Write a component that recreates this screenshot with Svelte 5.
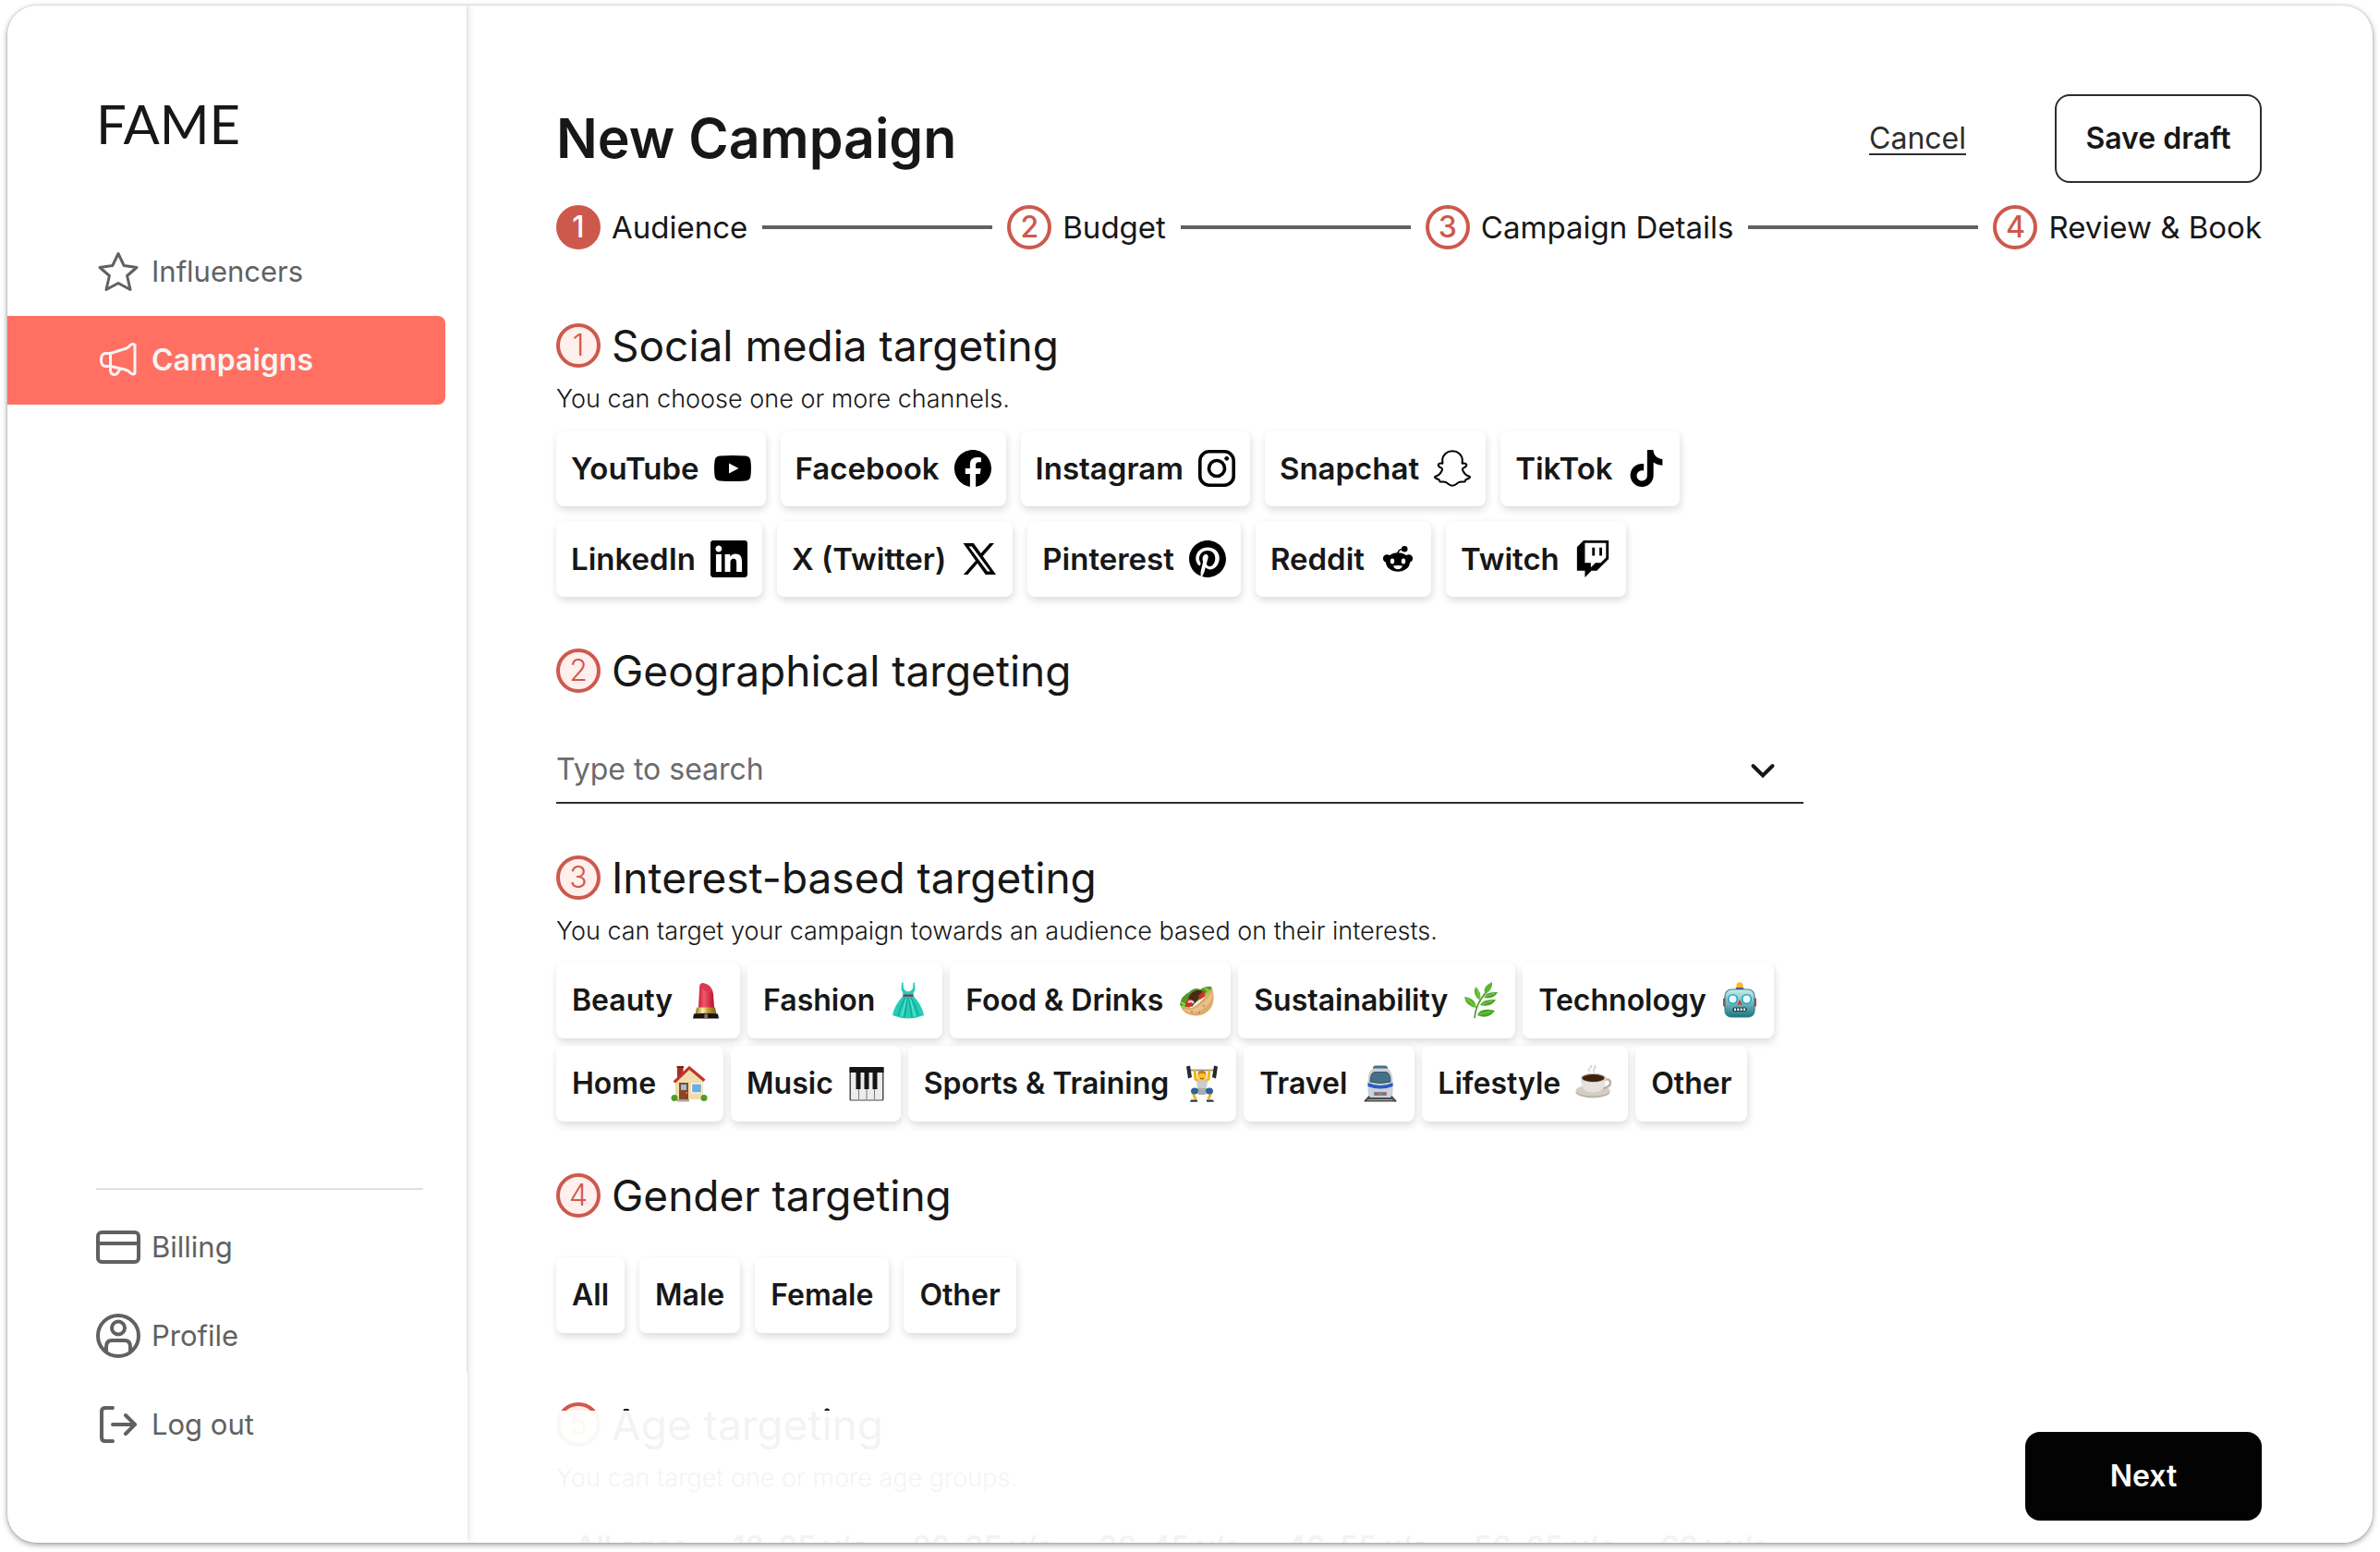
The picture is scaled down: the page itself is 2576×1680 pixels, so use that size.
<script>
    const steps = ['Audience', 'Budget', 'Campaign Details', 'Review & Book']

    const channels = [
        ['YouTube', 'youtube'],
        ['Facebook', 'facebook'],
        ['Instagram', 'instagram'],
        ['Snapchat', 'snapchat'],
        ['TikTok', 'tiktok'],
        ['LinkedIn', 'linkedin'],
        ['X (Twitter)', 'x'],
        ['Pinterest', 'pinterest'],
        ['Reddit', 'reddit'],
        ['Twitch', 'twitch']
    ]

    const interests = [
        ['Beauty', 'lipstick'],
        ['Fashion', 'dress'],
        ['Food & Drinks', 'wrap'],
        ['Sustainability', 'herb'],
        ['Technology', 'robot'],
        ['Home', 'house'],
        ['Music', 'piano'],
        ['Sports & Training', 'lifter'],
        ['Travel', 'train'],
        ['Lifestyle', 'coffee'],
        ['Other', null]
    ]

    const genders = ['All', 'Male', 'Female', 'Other']
    const ages = ['All ages', '18–25 y/o', '26–35 y/o', '36–45 y/o', '46–55 y/o', '56–65 y/o', '66+ y/o']

    // single colour brand marks on a 24 grid
    const marks = {
        facebook: 'M24 12.073c0-6.627-5.373-12-12-12s-12 5.373-12 12c0 5.99 4.388 10.954 10.125 11.854v-8.385H7.078v-3.47h3.047V9.43c0-3.007 1.792-4.669 4.533-4.669 1.312 0 2.686.235 2.686.235v2.953H15.83c-1.491 0-1.956.925-1.956 1.874v2.25h3.328l-.532 3.47h-2.796v8.385C19.612 23.027 24 18.062 24 12.073z',
        tiktok: 'M12.525.02c1.31-.02 2.61-.01 3.91-.02.08 1.53.63 3.09 1.75 4.17 1.12 1.11 2.7 1.62 4.24 1.79v4.03c-1.44-.05-2.89-.35-4.2-.97-.57-.26-1.1-.59-1.62-.93-.01 2.92.01 5.84-.02 8.75-.08 1.4-.54 2.79-1.35 3.94-1.31 1.92-3.58 3.17-5.91 3.21-1.43.08-2.86-.31-4.08-1.03-2.02-1.19-3.44-3.37-3.65-5.71-.02-.5-.03-1-.01-1.49.18-1.9 1.12-3.72 2.58-4.96 1.66-1.44 3.98-2.13 6.15-1.72.02 1.48-.04 2.96-.04 4.44-.99-.32-2.15-.23-3.02.37-.63.41-1.11 1.04-1.36 1.75-.21.51-.15 1.07-.14 1.61.24 1.64 1.82 3.02 3.5 2.87 1.12-.01 2.19-.66 2.77-1.61.19-.33.4-.67.41-1.06.1-1.79.06-3.57.07-5.36.01-4.03-.01-8.05.02-12.07z',
        linkedin: 'M20.447 20.452h-3.554v-5.569c0-1.328-.027-3.037-1.852-3.037-1.853 0-2.136 1.445-2.136 2.939v5.667H9.351V9h3.414v1.561h.046c.477-.9 1.637-1.85 3.37-1.85 3.601 0 4.267 2.37 4.267 5.455v6.286zM5.337 7.433c-1.144 0-2.063-.926-2.063-2.065 0-1.138.92-2.063 2.063-2.063 1.14 0 2.064.925 2.064 2.063 0 1.139-.925 2.065-2.064 2.065zm1.782 13.019H3.555V9h3.564v11.452zM22.225 0H1.771C.792 0 0 .774 0 1.729v20.542C0 23.227.792 24 1.771 24h20.451C23.2 24 24 23.227 24 22.271V1.729C24 .774 23.2 0 22.222 0h.003z',
        pinterest: 'M12.017 0C5.396 0 .029 5.367.029 11.987c0 5.079 3.158 9.417 7.618 11.162-.105-.949-.199-2.403.041-3.439.219-.937 1.406-5.957 1.406-5.957s-.359-.72-.359-1.781c0-1.663.967-2.911 2.168-2.911 1.024 0 1.518.769 1.518 1.688 0 1.029-.653 2.567-.992 3.992-.285 1.193.6 2.165 1.775 2.165 2.128 0 3.768-2.245 3.768-5.487 0-2.861-2.063-4.869-5.008-4.869-3.41 0-5.409 2.562-5.409 5.199 0 1.033.394 2.143.889 2.741.099.12.112.225.085.345-.09.375-.293 1.199-.334 1.363-.053.225-.172.271-.401.165-1.495-.69-2.433-2.878-2.433-4.646 0-3.776 2.748-7.252 7.92-7.252 4.158 0 7.392 2.967 7.392 6.923 0 4.135-2.607 7.462-6.233 7.462-1.214 0-2.354-.629-2.758-1.379l-.749 2.848c-.269 1.045-1.004 2.352-1.498 3.146 1.123.345 2.306.535 3.55.535 6.607 0 11.985-5.365 11.985-11.987C23.97 5.39 18.592.026 11.985.026L12.017 0z',
        twitch: 'M11.571 4.714h1.715v5.143H11.57zm4.715 0H18v5.143h-1.714zM6 0L1.714 4.286v15.428h5.143V24l4.286-4.286h3.428L22.286 12V0zm14.571 11.143l-3.428 3.428h-3.429l-3 3v-3H6.857V1.714h13.714Z'
    }

    let selected = $state([])
    let location = $state('')

    const toggle = (key) => {
        selected = selected.includes(key) ? selected.filter((k) => k !== key) : [...selected, key]
    }
</script>

{#snippet brand(name)}
    {#if marks[name]}
        <svg class="icon" viewBox="0 0 24 24" aria-hidden="true"><path d={marks[name]} /></svg>
    {:else if name === 'youtube'}
        <svg class="icon" viewBox="0 0 40 40" aria-hidden="true">
            <path fill-rule="evenodd" d="M6 6.600Q20 5.400 34 6.600Q38.800 7 39.400 11.500Q40.500 20 39.400 28.500Q38.800 33 34 33.400Q20 34.600 6 33.400Q1.200 33 .6 28.500Q-.5 20 .6 11.500Q1.200 7 6 6.600ZM16 14.500V25.500L26.500 20Z" />
        </svg>
    {:else if name === 'instagram'}
        <svg class="icon line" viewBox="0 0 40 40" aria-hidden="true">
            <rect x="1.800" y="1.800" width="36.400" height="36.400" rx="10" stroke-width="3.600" />
            <circle cx="20" cy="20" r="8.500" stroke-width="3.600" />
            <circle cx="30.700" cy="9.300" r="2.400" fill="#000" stroke="none" />
        </svg>
    {:else if name === 'snapchat'}
        <svg class="icon line" viewBox="0 0 40 40" aria-hidden="true">
            <path stroke-width="2" stroke-linejoin="round" d="M20 1.200C25.800 1.200 30.600 5.200 30.800 11L30.600 14.600C31.400 15 32.700 14 34.200 14.800C36.600 16.300 34.600 18.600 31.800 19.600C30.600 20.200 30.800 21.400 31.500 22.700C33 25.800 35.400 28 38.600 28.800C39.800 29.400 38.400 31.200 34.800 32C34 32.300 34.200 34.200 33.200 34.500C31.600 34.700 29.200 33.900 27 35C25 36.200 23.200 38.800 20 38.800S15 36.200 13 35C10.800 33.900 8.400 34.700 6.800 34.500C5.800 34.200 6 32.300 5.200 32C1.600 31.200 .2 29.400 1.400 28.800C4.600 28 7 25.800 8.500 22.700C9.200 21.400 9.400 20.200 8.200 19.600C5.400 18.600 3.400 16.300 5.800 14.800C7.300 14 8.600 15 9.400 14.600L9.200 11C9.400 5.200 14.200 1.200 20 1.200Z" />
        </svg>
    {:else if name === 'x'}
        <svg class="icon" viewBox="0 0 40 40" aria-hidden="true">
            <path fill-rule="evenodd" d="M2.500 3H13.800L21.700 14.100L31.400 3H36L23.700 17.100L38 37H26.700L18 24.800L7.400 37H2.800L16 21.900ZM8.600 6.400L28.700 33.600H31.800L11.800 6.400Z" />
        </svg>
    {:else if name === 'reddit'}
        <svg class="icon" viewBox="0 0 40 40" aria-hidden="true">
            <path d="M19.800 14.500Q20.500 9.600 25 9.500" fill="none" stroke="#000" stroke-width="1.600" />
            <circle cx="27.200" cy="9.200" r="3.300" />
            <circle cx="8.200" cy="19.500" r="4.300" />
            <circle cx="31.800" cy="19.500" r="4.300" />
            <ellipse cx="20" cy="23.500" rx="13" ry="10.200" />
            <ellipse cx="14" cy="22.400" rx="2.200" ry="3" fill="#fff" />
            <ellipse cx="26" cy="22.400" rx="2.200" ry="3" fill="#fff" />
            <path d="M15 27.500Q20 26.400 25 27.500Q23.600 31.300 20 31.300T15 27.500Z" fill="#fff" />
        </svg>
    {/if}
{/snippet}

{#snippet emoji(name)}
    <svg class="icon" viewBox="0 0 40 40" aria-hidden="true">
        {#if name === 'lipstick'}
            <defs>
                <linearGradient id="red"><stop offset="0" stop-color="#c81f36" /><stop offset=".35" stop-color="#f4566a" /><stop offset="1" stop-color="#b4122b" /></linearGradient>
                <linearGradient id="gold"><stop offset="0" stop-color="#8d6b1e" /><stop offset=".35" stop-color="#fff0a8" /><stop offset=".6" stop-color="#c49a36" /><stop offset="1" stop-color="#7c5b14" /></linearGradient>
            </defs>
            <path d="M12 28L13.200 4Q14 .6 18 1.200Q27 3.500 28 13L29 28Z" fill="url(#red)" />
            <path d="M14 3Q15.500 .8 19 1.800Q25.500 4.200 27.200 10.500Q22 11.500 17.500 8.500Q14 6 14 3Z" fill="#d93a52" />
            <path d="M10 27.500H30L31.500 35H8.500Z" fill="url(#gold)" />
            <path d="M7 34.500Q20 33 33 34.500L34 39.500H6Z" fill="#171414" />
            <path d="M18.500 34.500H22V39.500H18Z" fill="#77706a" />
        {:else if name === 'dress'}
            <path d="M14.500 .5L15 7Q17 11 20 10Q23 11 25 7L25.500 .5H27L27.500 8Q25 13 25.500 15Q35 25 37 36Q20 43 3 36Q5 25 14.500 15Q15 13 12.500 8L13 .5Z" fill="#25cdb5" />
            <path d="M17 17Q11 27 9 37M19 17L16 38.500M21 17L24 38.500M23 17Q29 27 31 37" fill="none" stroke="#12a694" stroke-width="1.400" />
            <path d="M18 18L13 37M22 18L27 37" fill="none" stroke="#6ff0dc" stroke-width="1" />
            <path d="M14.600 13.600H25.400L25.700 15.800H14.300Z" fill="#7d3557" />
        {:else if name === 'wrap'}
            <path d="M2 25Q3 15 12 11Q18 5 24 8Q31 4 36 5L37 9L9 30Z" fill="#4f9b28" />
            <path d="M10 21Q12 11 20 9Q26 8 27 12L15 27Z" fill="#4b2817" />
            <path d="M7 24L12 17L17 24L11 28ZM22 15L28 9L30 15L24 19Z" fill="#cf2f25" />
            <path d="M11 22Q15 19 17 23" fill="none" stroke="#f3c2da" stroke-width="2.500" />
            <path d="M3 22L7 24L5 27L9 29M29 7L33 9L31 12L35 10" fill="none" stroke="#86cf3f" stroke-width="2.200" />
            <path d="M3 27Q8 26 15 28Q27 21 37 6Q41 20 35 29Q28 37 19 36.500Q7 36 3 27Z" fill="#dcab6b" />
            <path d="M6 29Q16 32 24 25Q33 18 37 10Q38 18 33 24Q25 34 14 33Q8 32 6 29Z" fill="#e8c18a" />
            <circle cx="15" cy="32" r=".9" fill="#b27a3d" /><circle cx="28" cy="26" r=".9" fill="#b27a3d" /><circle cx="23" cy="33" r=".9" fill="#b27a3d" />
        {:else if name === 'herb'}
            <path d="M13 39Q14 27 21 17T31 3" fill="none" stroke="#4b9a26" stroke-width="1.600" />
            <path d="M15 28Q3 26 2 16Q14 17 15 28ZM19 20Q10 14 14 5Q21 11 19 20ZM25 13Q20 6 32 0Q33 8 25 13Z" fill="#5cb531" />
            <path d="M23 17Q25 10 38 11Q34 19 23 17ZM19 25Q22 18 36 19Q31 28 19 25ZM16 36Q19 27 35 31Q28 41 16 36Z" fill="#4aa328" />
            <path d="M5 18L14 27M15.500 8L19 19M24 16L35 12M21 24L33 20M18 35L31 32" fill="none" stroke="#9ad566" stroke-width=".8" />
        {:else if name === 'robot'}
            <defs><linearGradient id="bot" x2="0" y2="1"><stop offset="0" stop-color="#c9eeec" /><stop offset=".5" stop-color="#71b9bd" /><stop offset="1" stop-color="#1d727f" /></linearGradient></defs>
            <rect x="2" y="17" width="36" height="10" rx="2" fill="#d8332f" />
            <path d="M16 8Q20 4 24 8L23 5H17Z" fill="#60409a" />
            <circle cx="20" cy="3.800" r="3.600" fill="#f9b824" />
            <path d="M15.500 6H24.500L23 9H17Z" fill="#68459c" />
            <rect x="4" y="8" width="32" height="30" rx="7" fill="url(#bot)" stroke="#34818a" stroke-width="1.200" />
            <circle cx="12.500" cy="18.500" r="4.800" fill="#e9ffff" stroke="#2aa2c4" stroke-width="1.600" />
            <circle cx="27.500" cy="18.500" r="4.800" fill="#e9ffff" stroke="#2aa2c4" stroke-width="1.600" />
            <path d="M20 19L23 24.500H17Z" fill="#df3c32" />
            <rect x="12.500" y="27.500" width="15" height="4.500" rx="1.500" fill="#18434c" />
            <path d="M14 28.500H16V31H14ZM17.300 28.500H19.300V31H17.300ZM20.700 28.500H22.700V31H20.700ZM24 28.500H26V31H24Z" fill="#fff" />
        {:else if name === 'house'}
            <path d="M7 1.500H13.500V12L7 16Z" fill="#a82e26" />
            <path d="M6.500 1H14V3H6.500Z" fill="#7b1d18" />
            <path d="M5 17L20 3L35 17V37H5Z" fill="#f2dcae" />
            <path d="M2.500 17.500L20 .8L37.500 15.500L35.500 18L20 5L5 19.500Z" fill="#c13529" />
            <rect x="22" y="19.500" width="12" height="11" fill="#fff8e4" /><rect x="23.200" y="20.700" width="9.600" height="8.600" fill="#67afe2" />
            <rect x="9" y="19" width="10" height="19" fill="#8b4626" />
            <rect x="11" y="21" width="6" height="6" fill="#8ec5e7" />
            <circle cx="17.300" cy="30" r=".8" fill="#f3cf6b" />
            <circle cx="4" cy="35.500" r="3.500" fill="#4f9c2a" /><circle cx="36" cy="35.500" r="3.500" fill="#4f9c2a" />
            <rect x="7" y="37" width="13" height="2.500" fill="#a9a59d" />
        {:else if name === 'piano'}
            <rect x="1.500" y="2" width="37" height="36.500" rx="1.500" fill="#4a4a4c" />
            <rect x="3" y="8" width="34" height="29.500" fill="#ececec" />
            <path d="M11.500 8V37.500M20 8V37.500M28.500 8V37.500" stroke="#7c7c7e" stroke-width="1" />
            <path d="M1.500 2H38.500V8H1.500ZM8.500 8H13.500V26H8.500ZM17.500 8H22.500V26H17.500ZM26.500 8H31.500V26H26.500Z" fill="#151516" />
        {:else if name === 'lifter'}
            <path d="M4 5.500H36" stroke="#8d9297" stroke-width="1.800" />
            <path d="M3 1.500L7 .5L9 13L5 14.500ZM37 1.500L33 .5L31 13L35 14.500Z" fill="#26292e" />
            <path d="M12 6L13 15L17 18M28 6L27 15L23 18" fill="none" stroke="#f5b41f" stroke-width="3" stroke-linecap="round" />
            <path d="M14 17Q20 15 26 17L24.500 29H15.500Z" fill="#c9cbce" />
            <circle cx="20" cy="12" r="4.800" fill="#fbc02e" />
            <path d="M15.500 11Q15 5.500 20 5.800T24.500 11L22.500 9H17.500Z" fill="#c97e14" />
            <path d="M18 14.200Q20 15.800 22 14.200" fill="none" stroke="#8a4f0e" />
            <path d="M15 27L10 29L13 37M25 27L30 29L27 37" fill="none" stroke="#f5b41f" stroke-width="3" />
            <path d="M14.500 25H25.500L24 32H16Z" fill="#a9acb1" />
            <ellipse cx="12" cy="28" rx="4" ry="3.600" fill="#2d6297" /><ellipse cx="28" cy="28" rx="4" ry="3.600" fill="#2d6297" />
            <path d="M8 37.500H15V39.800H7ZM25 37.500H32L33 39.800H25Z" fill="#223b57" />
        {:else if name === 'train'}
            <path d="M9 33L3 39.500M31 33L37 39.500M6 36H34M4 38.500H36" stroke="#4c4b4d" stroke-width="2" />
            <rect x="12" y=".5" width="16" height="7" rx="3" fill="#486f86" />
            <path d="M6.500 17Q7 4 14 3.500H26Q33 4 33.500 17V30Q33 35 28 35H12Q7 35 6.500 30Z" fill="#ccd2d9" />
            <path d="M9 18Q9 8 14 7.500H26Q31 8 31 18Q20 21 9 18Z" fill="#44718a" stroke="#31414d" stroke-width=".8" />
            <path d="M6.500 19Q20 25 33.500 19V23Q20 28 6.500 23Z" fill="#285cc4" />
            <path d="M13 29H27V33H13Z" fill="#7d858d" />
            <path d="M14.500 30H17V32H14.500ZM23 30H25.500V32H23Z" fill="#e3402f" />
        {:else if name === 'coffee'}
            <path d="M16 7Q13 5 16 3T16 0M21 8Q18 5 21 3.500T20 .5" fill="none" stroke="#d4d1cf" stroke-width="1.500" />
            <ellipse cx="19" cy="29" rx="18.500" ry="6.500" fill="#b9b3ac" />
            <ellipse cx="19" cy="27.500" rx="18.500" ry="6" fill="#d3cdc6" />
            <path d="M31 16Q38 14 38 19T29 25" fill="none" stroke="#b5aea6" stroke-width="2.400" />
            <path d="M6 14H33Q33 25 27 28Q19 31 12 28Q6 25 6 14Z" fill="#e6e1dc" />
            <ellipse cx="19.500" cy="13.800" rx="13.500" ry="5" fill="#c9c2ba" />
            <ellipse cx="19.500" cy="14" rx="12" ry="4" fill="#41200f" />
        {/if}
    </svg>
{/snippet}

{#snippet heading(number, text, target)}
    <h2>
        <span class="badge soft">{number}</span>
        {#if target}
            <label for={target}>{text}</label>
        {:else}
            {text}
        {/if}
    </h2>
{/snippet}

{#snippet chip(group, text)}
    <button
        type="button"
        class="chip"
        aria-pressed={selected.includes(group + text)}
        onclick={() => toggle(group + text)}
    >{text}</button>
{/snippet}

<div class="page">
    <div class="window">
        <aside class="sidebar">
            <a class="logo" href="/">FAME</a>

            <nav class="menu">
                <a class="menu-item" href="/influencers">
                    <svg viewBox="0 0 48 48" aria-hidden="true">
                        <path d="M24 4.500L30.200 17.500L44 19.500L33.600 28.500L37 43.500L24 36.500L11 43.500L14.400 28.500L4 19.500L17.800 17.500Z" />
                    </svg>
                    Influencers
                </a>
                <a class="menu-item active" href="/campaigns" aria-current="page">
                    <svg viewBox="0 0 48 48" aria-hidden="true">
                        <path d="M15.500 16.500L33 11Q35 10 37 7.700Q39.500 5.500 42 7.500V38Q39.500 40 37 37.500Q35 35 31 34L15.500 30.500ZM15.500 16.500H10Q5.500 17 5.500 23.500T10 30.500H15.500ZM15.500 31V35Q16 39.500 20 39.500Q22.500 39.500 24 36.500L26.500 33" />
                    </svg>
                    Campaigns
                </a>
            </nav>

            <nav class="menu bottom">
                <a class="menu-item" href="/billing">
                    <svg viewBox="0 0 48 48" aria-hidden="true">
                        <rect x="2" y="8" width="44" height="32" rx="4" />
                        <path d="M2 20H46" />
                    </svg>
                    Billing
                </a>
                <a class="menu-item" href="/profile">
                    <svg viewBox="0 0 48 48" aria-hidden="true">
                        <circle cx="24" cy="24" r="22" />
                        <circle cx="24" cy="15.500" r="7" />
                        <path d="M11 41V36Q11 29 17 29H31Q37 29 37 36V41" />
                    </svg>
                    Profile
                </a>
                <a class="menu-item" href="/logout">
                    <svg viewBox="0 0 48 48" aria-hidden="true">
                        <path d="M18 6H10Q6 6 6 10V38Q6 42 10 42H18M18 24H42M32 14L42 24L32 34" />
                    </svg>
                    Log out
                </a>
            </nav>
        </aside>

        <main>
            <header>
                <h1>New Campaign</h1>
                <a class="cancel" href="/campaigns">Cancel</a>
                <button type="button" class="save">Save draft</button>
            </header>

            <ol class="steps">
                {#each steps as step, i}
                    {#if i > 0}
                        <li class="rule" aria-hidden="true"></li>
                    {/if}
                    <li class="step">
                        <span class="badge" class:current={i === 0}>{i + 1}</span>
                        {step}
                    </li>
                {/each}
            </ol>

            <section>
                {@render heading(1, 'Social media targeting')}
                <p>You can choose one or more channels.</p>
                <div class="chips channels">
                    {#each channels as [label, icon]}
                        <button
                            type="button"
                            class="chip"
                            aria-pressed={selected.includes(icon)}
                            onclick={() => toggle(icon)}
                        >{label}{@render brand(icon)}</button>
                    {/each}
                </div>
            </section>

            <section>
                {@render heading(2, 'Geographical targeting', 'location')}
                <div class="search">
                    <input id="location" type="text" placeholder="Type to search" bind:value={location}>
                    <svg viewBox="0 0 48 48" aria-hidden="true"><path d="M13.500 20L24 30.500L34.500 20" /></svg>
                </div>
            </section>

            <section>
                {@render heading(3, 'Interest-based targeting')}
                <p>You can target your campaign towards an audience based on their interests.</p>
                <div class="chips interests">
                    {#each interests as [label, icon]}
                        <button
                            type="button"
                            class="chip"
                            aria-pressed={selected.includes('interest' + label)}
                            onclick={() => toggle('interest' + label)}
                        >{label}{#if icon}{@render emoji(icon)}{/if}</button>
                    {/each}
                </div>
            </section>

            <section class="gender">
                {@render heading(4, 'Gender targeting')}
                <div class="chips">
                    {#each genders as gender}
                        {@render chip('gender', gender)}
                    {/each}
                </div>
            </section>

            <section>
                {@render heading(5, 'Age targeting')}
                <p>You can target one or more age groups.</p>
                <div class="chips ages">
                    {#each ages as age}
                        {@render chip('age', age)}
                    {/each}
                </div>
            </section>

            <footer>
                <button type="button" class="next">Next</button>
            </footer>
        </main>
    </div>
</div>

<style>
    :global(body) {
        background: #fff;
    }

    .page {
        box-sizing: border-box;
        height: 100vh;
        padding: 6px 8px 10px;
        color: #171717;
        font-family: Inter, "Noto Sans", sans-serif;
        font-size: 32px;
        line-height: 40px;
    }

    .window {
        display: flex;
        height: 100%;
        overflow: hidden;
        border-radius: 32px;
        background: #fff;
        box-shadow: 0 0 2px rgba(0, 0, 0, .2), 0 2px 6px rgba(0, 0, 0, .4);
    }

    a {
        color: inherit;
        text-decoration: none;
    }

    button {
        font: inherit;
        color: inherit;
        cursor: pointer;
    }

    /* SIDEBAR */

    .sidebar {
        position: relative;
        z-index: 1;
        display: flex;
        flex-direction: column;
        flex: 0 0 498px;
        box-sizing: border-box;
        padding: 96px 24px 80px 0;
        background: linear-gradient(#e4e4e4, #e4e4e4) no-repeat right top / 1px 89% #fff;
        box-shadow: 0 0 8px rgba(0, 0, 0, .16);
    }

    .logo {
        padding-left: 96px;
        font-family: Lato, sans-serif;
        font-size: 58px;
        line-height: 64px;
    }

    .menu {
        padding-top: 80px;
        color: #616161;
    }

    .menu-item {
        display: flex;
        align-items: center;
        gap: 12px;
        height: 96px;
        padding-left: 96px;
        border-radius: 0 8px 8px 0;
        font-size: 31px;
    }

    .menu-item.active {
        background: #ff7062;
        color: #f5f5f5;
        font-size: 32px;
        font-weight: 600;
    }

    .menu-item svg {
        width: 48px;
        height: 48px;
        fill: none;
        stroke: currentColor;
        stroke-width: 4;
        stroke-linecap: round;
        stroke-linejoin: round;
    }

    .menu:not(.bottom) svg {
        stroke-width: 3;
    }

    .menu.bottom {
        margin-top: auto;
        padding-top: 16px;
        background: linear-gradient(#e0e0e0, #e0e0e0) no-repeat 96px 0 / calc(100% - 120px) 2px;
    }

    /* CONTENT */

    main {
        position: relative;
        flex: 1;
        min-width: 0;
        overflow: hidden;
        padding: 96px 120px 0 96px;
    }

    header {
        display: flex;
        align-items: center;
    }

    h1 {
        flex: 1;
        margin: 0;
        font-size: 59px;
        font-weight: 600;
        line-height: 72px;
    }

    .cancel {
        margin-right: 96px;
        color: #2d2d2d;
        text-decoration: underline;
        text-decoration-thickness: 2px;
        text-underline-offset: 5px;
    }

    .save,
    .next {
        height: 96px;
        border-radius: 16px;
        font-weight: 600;
    }

    .save {
        width: 224px;
        padding: 0;
        border: 2px solid #2d2d2d;
        background: #fff;
    }

    .next {
        width: 256px;
        border: none;
        background: #030303;
        color: #fff;
    }

    .steps {
        display: flex;
        align-items: center;
        gap: 16px;
        margin: 24px 0 80px;
        padding: 0;
        font-size: 33px;
        list-style: none;
    }

    .step {
        display: flex;
        align-items: center;
        gap: 12px;
    }

    .rule {
        flex: 1;
        height: 4px;
        background: #616161;
    }

    .badge {
        display: flex;
        align-items: center;
        justify-content: center;
        box-sizing: border-box;
        width: 48px;
        height: 48px;
        border: 4px solid #cd594d;
        border-radius: 50%;
        color: #cd594d;
        font-size: 32px;
        font-weight: 500;
    }

    .badge.current {
        background: #cd594d;
        color: #fff;
    }

    .badge.soft {
        background: #ffefed;
        font-weight: 300;
    }

    section {
        margin-bottom: 56px;
    }

    h2 {
        display: flex;
        align-items: center;
        gap: 12px;
        margin: 0;
        font-size: 46px;
        font-weight: 400;
        line-height: 48px;
    }

    p {
        margin: 16px 0;
        font-size: 27px;
        font-weight: 300;
        line-height: 36px;
    }

    .chips {
        display: flex;
        flex-wrap: wrap;
        gap: 16px;
        max-width: 1350px;
    }

    .interests,
    .ages {
        gap: 8px;
    }

    .channels {
        max-width: 1240px;
    }

    .chip {
        display: flex;
        align-items: center;
        gap: 16px;
        height: 82px;
        padding: 0 17px;
        border: none;
        border-radius: 8px;
        background: #fff;
        box-shadow: 1px 4px 8px rgba(0, 0, 0, .14);
        font-weight: 600;
        white-space: nowrap;
    }

    .channels .chip {
        padding: 0 16px;
        font-size: 33px;
    }

    .ages {
        flex-wrap: nowrap;
    }

    .ages .chip {
        padding: 0 20px;
    }

    .icon {
        flex: none;
        width: 40px;
        height: 40px;
    }

    .icon.line {
        fill: none;
        stroke: #000;
    }

    .search {
        display: flex;
        align-items: center;
        box-sizing: border-box;
        max-width: 1350px;
        height: 72px;
        margin-top: 48px;
        padding-right: 20px;
        border-bottom: 2px solid #2d2d2d;
    }

    .search input {
        flex: 1;
        min-width: 0;
        padding: 0;
        border: none;
        outline: none;
        background: none;
        color: inherit;
        font: inherit;
    }

    .search input::placeholder {
        color: #6b6b6b;
        opacity: 1;
    }

    .search svg {
        width: 48px;
        height: 48px;
        fill: none;
        stroke: #171717;
        stroke-width: 4;
        stroke-linecap: round;
    }

    .gender {
        margin-bottom: 75px;
    }

    .gender .chips {
        margin-top: 43px;
    }

    /* fades the part of the form that runs on below the window */
    footer {
        position: absolute;
        right: 0;
        bottom: 0;
        left: 0;
        display: flex;
        justify-content: flex-end;
        padding: 23px 120px 24px 96px;
        background: rgba(255, 255, 255, .95);
    }
</style>
